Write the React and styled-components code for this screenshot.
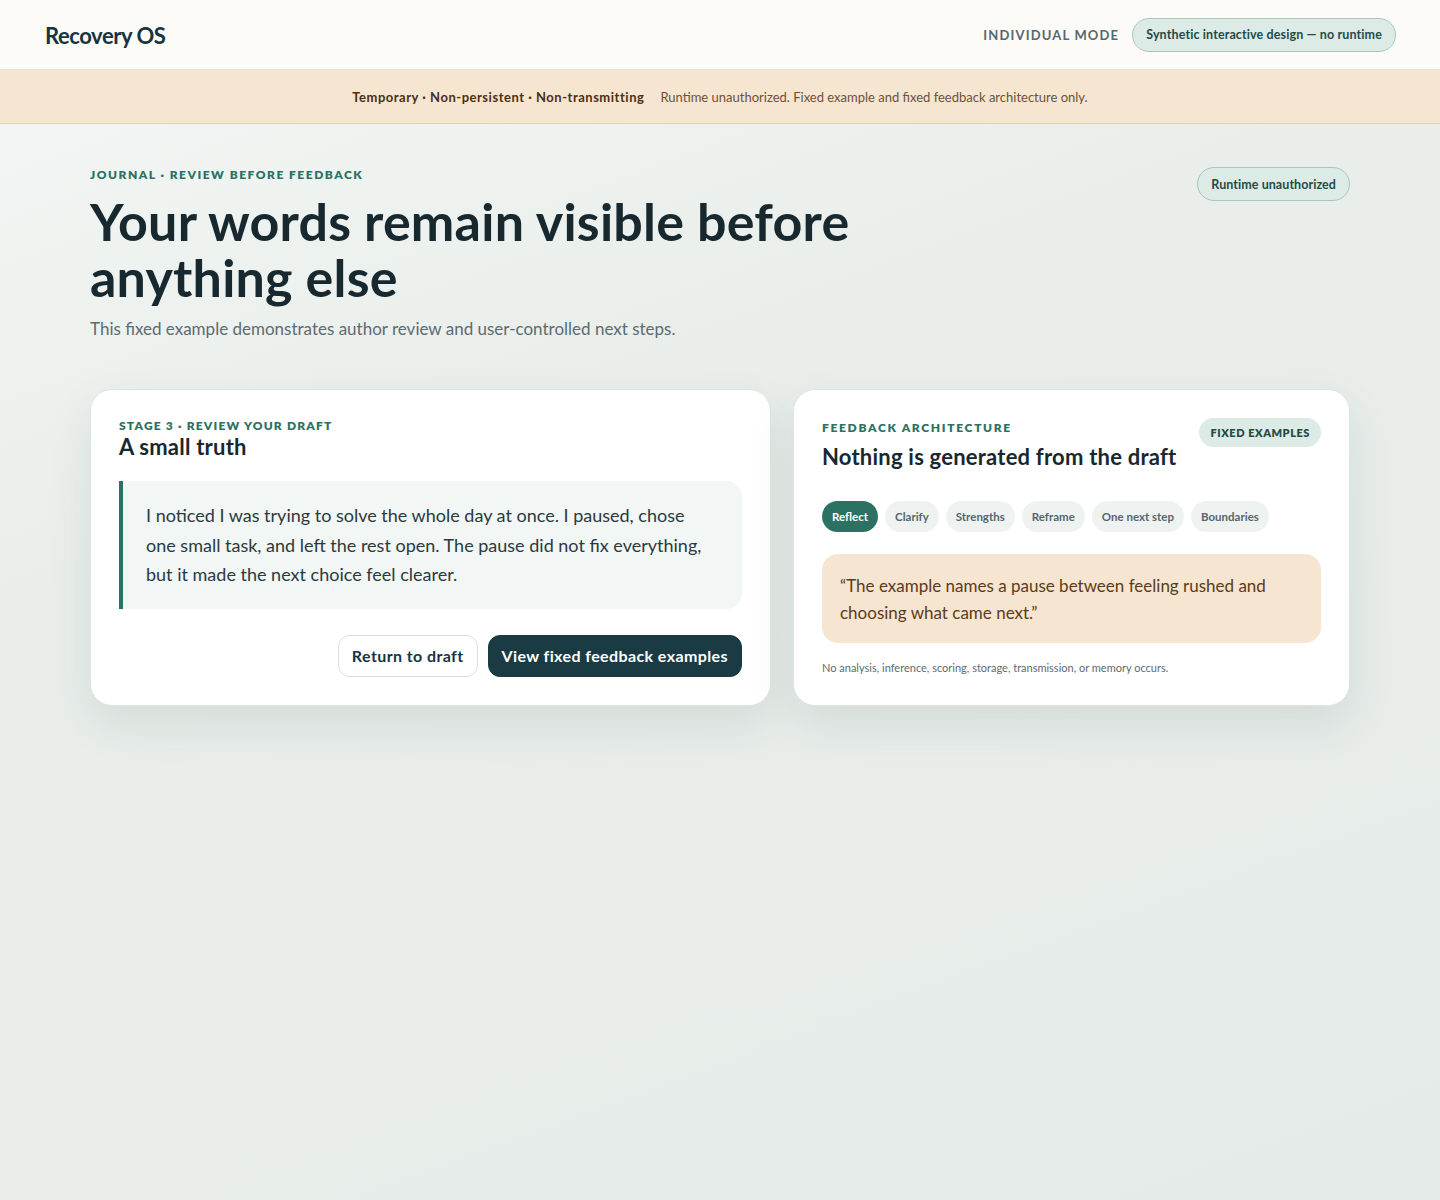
import React, { useState } from "react";
import styled, { createGlobalStyle } from "styled-components";

const GlobalStyle = createGlobalStyle`
  * { box-sizing: border-box; }
  html, body {
    margin: 0;
    padding: 0;
  }
  body {
    font-family: "Segoe UI", Lato, "Noto Sans", sans-serif;
    color: #17282f;
    background: #e7ece9;
  }
`;

const TABS = ["Reflect", "Clarify", "Strengths", "Reframe", "One next step", "Boundaries"];

function App() {
  const [active, setActive] = useState("Reflect");

  return (
    <Page>
      <GlobalStyle />
      <Header>
        <Logo>Recovery OS</Logo>
        <HeaderRight>
          <Mode>INDIVIDUAL MODE</Mode>
          <Pill>Synthetic interactive design — no runtime</Pill>
        </HeaderRight>
      </Header>

      <Banner>
        <strong>Temporary · Non-persistent · Non-transmitting</strong>
        <span>Runtime unauthorized. Fixed example and fixed feedback architecture only.</span>
      </Banner>

      <Main>
        <Hero>
          <div>
            <Eyebrow $spacing={0.125}>JOURNAL · REVIEW BEFORE FEEDBACK</Eyebrow>
            <Title>Your words remain visible before anything else</Title>
            <Lead>This fixed example demonstrates author review and user-controlled next steps.</Lead>
          </div>
          <Pill $large>Runtime unauthorized</Pill>
        </Hero>

        <Cards>
          <Card>
            <Eyebrow $spacing={0.1}>STAGE 3 · REVIEW YOUR DRAFT</Eyebrow>
            <CardTitle>A small truth</CardTitle>
            <Draft>
              I noticed I was trying to solve the whole day at once. I paused, chose one small
              task, and left the rest open. The pause did not fix everything, but it made the
              next choice feel clearer.
            </Draft>
            <Actions>
              <Button type="button">Return to draft</Button>
              <Button type="button" $primary>View fixed feedback examples</Button>
            </Actions>
          </Card>

          <Card $top={30}>
            <CardHead>
              <div>
                <Eyebrow $spacing={0.14}>FEEDBACK ARCHITECTURE</Eyebrow>
                <CardTitle $spaced>Nothing is generated from the draft</CardTitle>
              </div>
              <Tag>FIXED EXAMPLES</Tag>
            </CardHead>
            <Tabs>
              {TABS.map((t) => (
                <Tab key={t} type="button" $active={t === active} onClick={() => setActive(t)}>
                  {t}
                </Tab>
              ))}
            </Tabs>
            <Example>
              “The example names a pause between feeling rushed and choosing what came next.”
            </Example>
            <Note>No analysis, inference, scoring, storage, transmission, or memory occurs.</Note>
          </Card>
        </Cards>
      </Main>
    </Page>
  );
}

export default App;

// Styled Components
const Page = styled.div`
  min-height: 1200px;
  display: flex;
  flex-direction: column;
  background: linear-gradient(160deg, #f4f7f5 0%, #e9eeeb 35%, #e5ebe8 100%);
`;

const Header = styled.header`
  height: 70px;
  padding: 0 44px 0 45px;
  display: flex;
  align-items: center;
  justify-content: space-between;
  background: #fcfbf8;
  border-bottom: 1px solid #e3e4df;
`;

const Logo = styled.div`
  margin-top: 2px;
  font-size: 22px;
  font-weight: 700;
  letter-spacing: -0.02em;
  color: #17353f;
`;

const HeaderRight = styled.div`
  display: flex;
  align-items: center;
  gap: 13px;
`;

const Mode = styled.span`
  font-size: 13px;
  font-weight: 700;
  letter-spacing: 0.09em;
  color: #58676c;
`;

const Pill = styled.span`
  display: inline-flex;
  align-items: center;
  height: 34px;
  padding: 0 13px;
  border-radius: 999px;
  background: #ddebe6;
  border: 1px solid #a9c8bd;
  color: #1f4b46;
  font-size: 12.5px;
  letter-spacing: ${(p) => (p.$large ? "0.005em" : "0.01em")};
  font-weight: 700;
  white-space: nowrap;
`;

const Banner = styled.div`
  height: 54px;
  display: flex;
  align-items: center;
  justify-content: center;
  gap: 16px;
  background: #f6e5d0;
  border-bottom: 1px solid #e6cfb3;
  font-size: 13px;

  strong {
    font-weight: 700;
    letter-spacing: 0.04em;
    color: #4b2f13;
  }

  span {
    color: #6c5236;
  }
`;

const Main = styled.main`
  width: 1260px;
  margin: 0 auto;
  padding: 43px 0 0;
`;

const Hero = styled.section`
  display: flex;
  justify-content: space-between;
  align-items: flex-start;
`;

const Eyebrow = styled.div`
  font-size: 12px;
  font-weight: 800;
  letter-spacing: ${(p) => p.$spacing}em;
  color: #2c7263;
`;

const Title = styled.h1`
  margin: 11px 0 0;
  max-width: 800px;
  font-size: 52px;
  line-height: 56px;
  font-weight: 700;
  letter-spacing: 0.004em;
  color: #17282f;
`;

const Lead = styled.p`
  margin: 13px 0 0;
  font-size: 17px;
  color: #5d6b70;
`;

const Cards = styled.div`
  margin-top: 50px;
  display: grid;
  grid-template-columns: 681px 1fr;
  gap: 22px;
  align-items: stretch;
`;

const Card = styled.section`
  min-height: 314px;
  padding: ${(p) => p.$top || 28}px 28px 28px;
  background: #ffffff;
  border: 1px solid #dde5e2;
  border-radius: 22px;
  box-shadow: 0 18px 44px rgba(40, 70, 60, 0.1);
  display: flex;
  flex-direction: column;
`;

const CardHead = styled.div`
  display: flex;
  justify-content: space-between;
  align-items: flex-start;
`;

const CardTitle = styled.h2`
  margin: ${(p) => (p.$spaced ? "8px 0 0" : "0")};
  font-size: 22px;
  line-height: 28px;
  font-weight: 700;
  letter-spacing: 0.01em;
  color: #17282f;
`;

const Draft = styled.blockquote`
  margin: 20px 0 0;
  padding: 20px 24px 19px 23px;
  background: #f2f6f4;
  border-left: 4px solid #2c7263;
  border-radius: 0 16px 16px 0;
  font-size: 18px;
  line-height: 29.5px;
  color: #2b3a40;
`;

const Actions = styled.div`
  margin-top: 26px;
  display: flex;
  justify-content: flex-end;
  gap: 10px;
`;

const Button = styled.button`
  height: 42px;
  padding: 0 13px;
  border-radius: 12px;
  font-family: inherit;
  font-size: 16px;
  font-weight: 700;
  letter-spacing: 0.025em;
  cursor: pointer;
  border: 1px solid ${(p) => (p.$primary ? "#1a3a44" : "#d9e0de")};
  background: ${(p) => (p.$primary ? "#1a3a44" : "#ffffff")};
  color: ${(p) => (p.$primary ? "#ffffff" : "#17353f")};
`;

const Tag = styled.span`
  margin-top: -2px;
  height: 29px;
  padding: 0 11px;
  display: inline-flex;
  align-items: center;
  border-radius: 999px;
  background: #ddebe6;
  color: #1f4b46;
  font-size: 11px;
  font-weight: 800;
  letter-spacing: 0.05em;
  white-space: nowrap;
`;

const Tabs = styled.div`
  margin-top: 30px;
  display: flex;
  flex-wrap: wrap;
  gap: 7px;
`;

const Tab = styled.button`
  height: 31px;
  padding: 0 10px;
  border: none;
  border-radius: 999px;
  font-family: inherit;
  font-size: 11.5px;
  font-weight: 700;
  cursor: pointer;
  background: ${(p) => (p.$active ? "#2c7263" : "#eef2f1")};
  color: ${(p) => (p.$active ? "#ffffff" : "#56666c")};
`;

const Example = styled.div`
  margin-top: 22px;
  padding: 18px 18px 17px;
  background: #f6e5d0;
  border-radius: 16px;
  font-size: 17px;
  line-height: 27px;
  color: #5c3b19;
`;

const Note = styled.p`
  margin: 18px 0 0;
  font-size: 11px;
  color: #5d6b70;
`;
